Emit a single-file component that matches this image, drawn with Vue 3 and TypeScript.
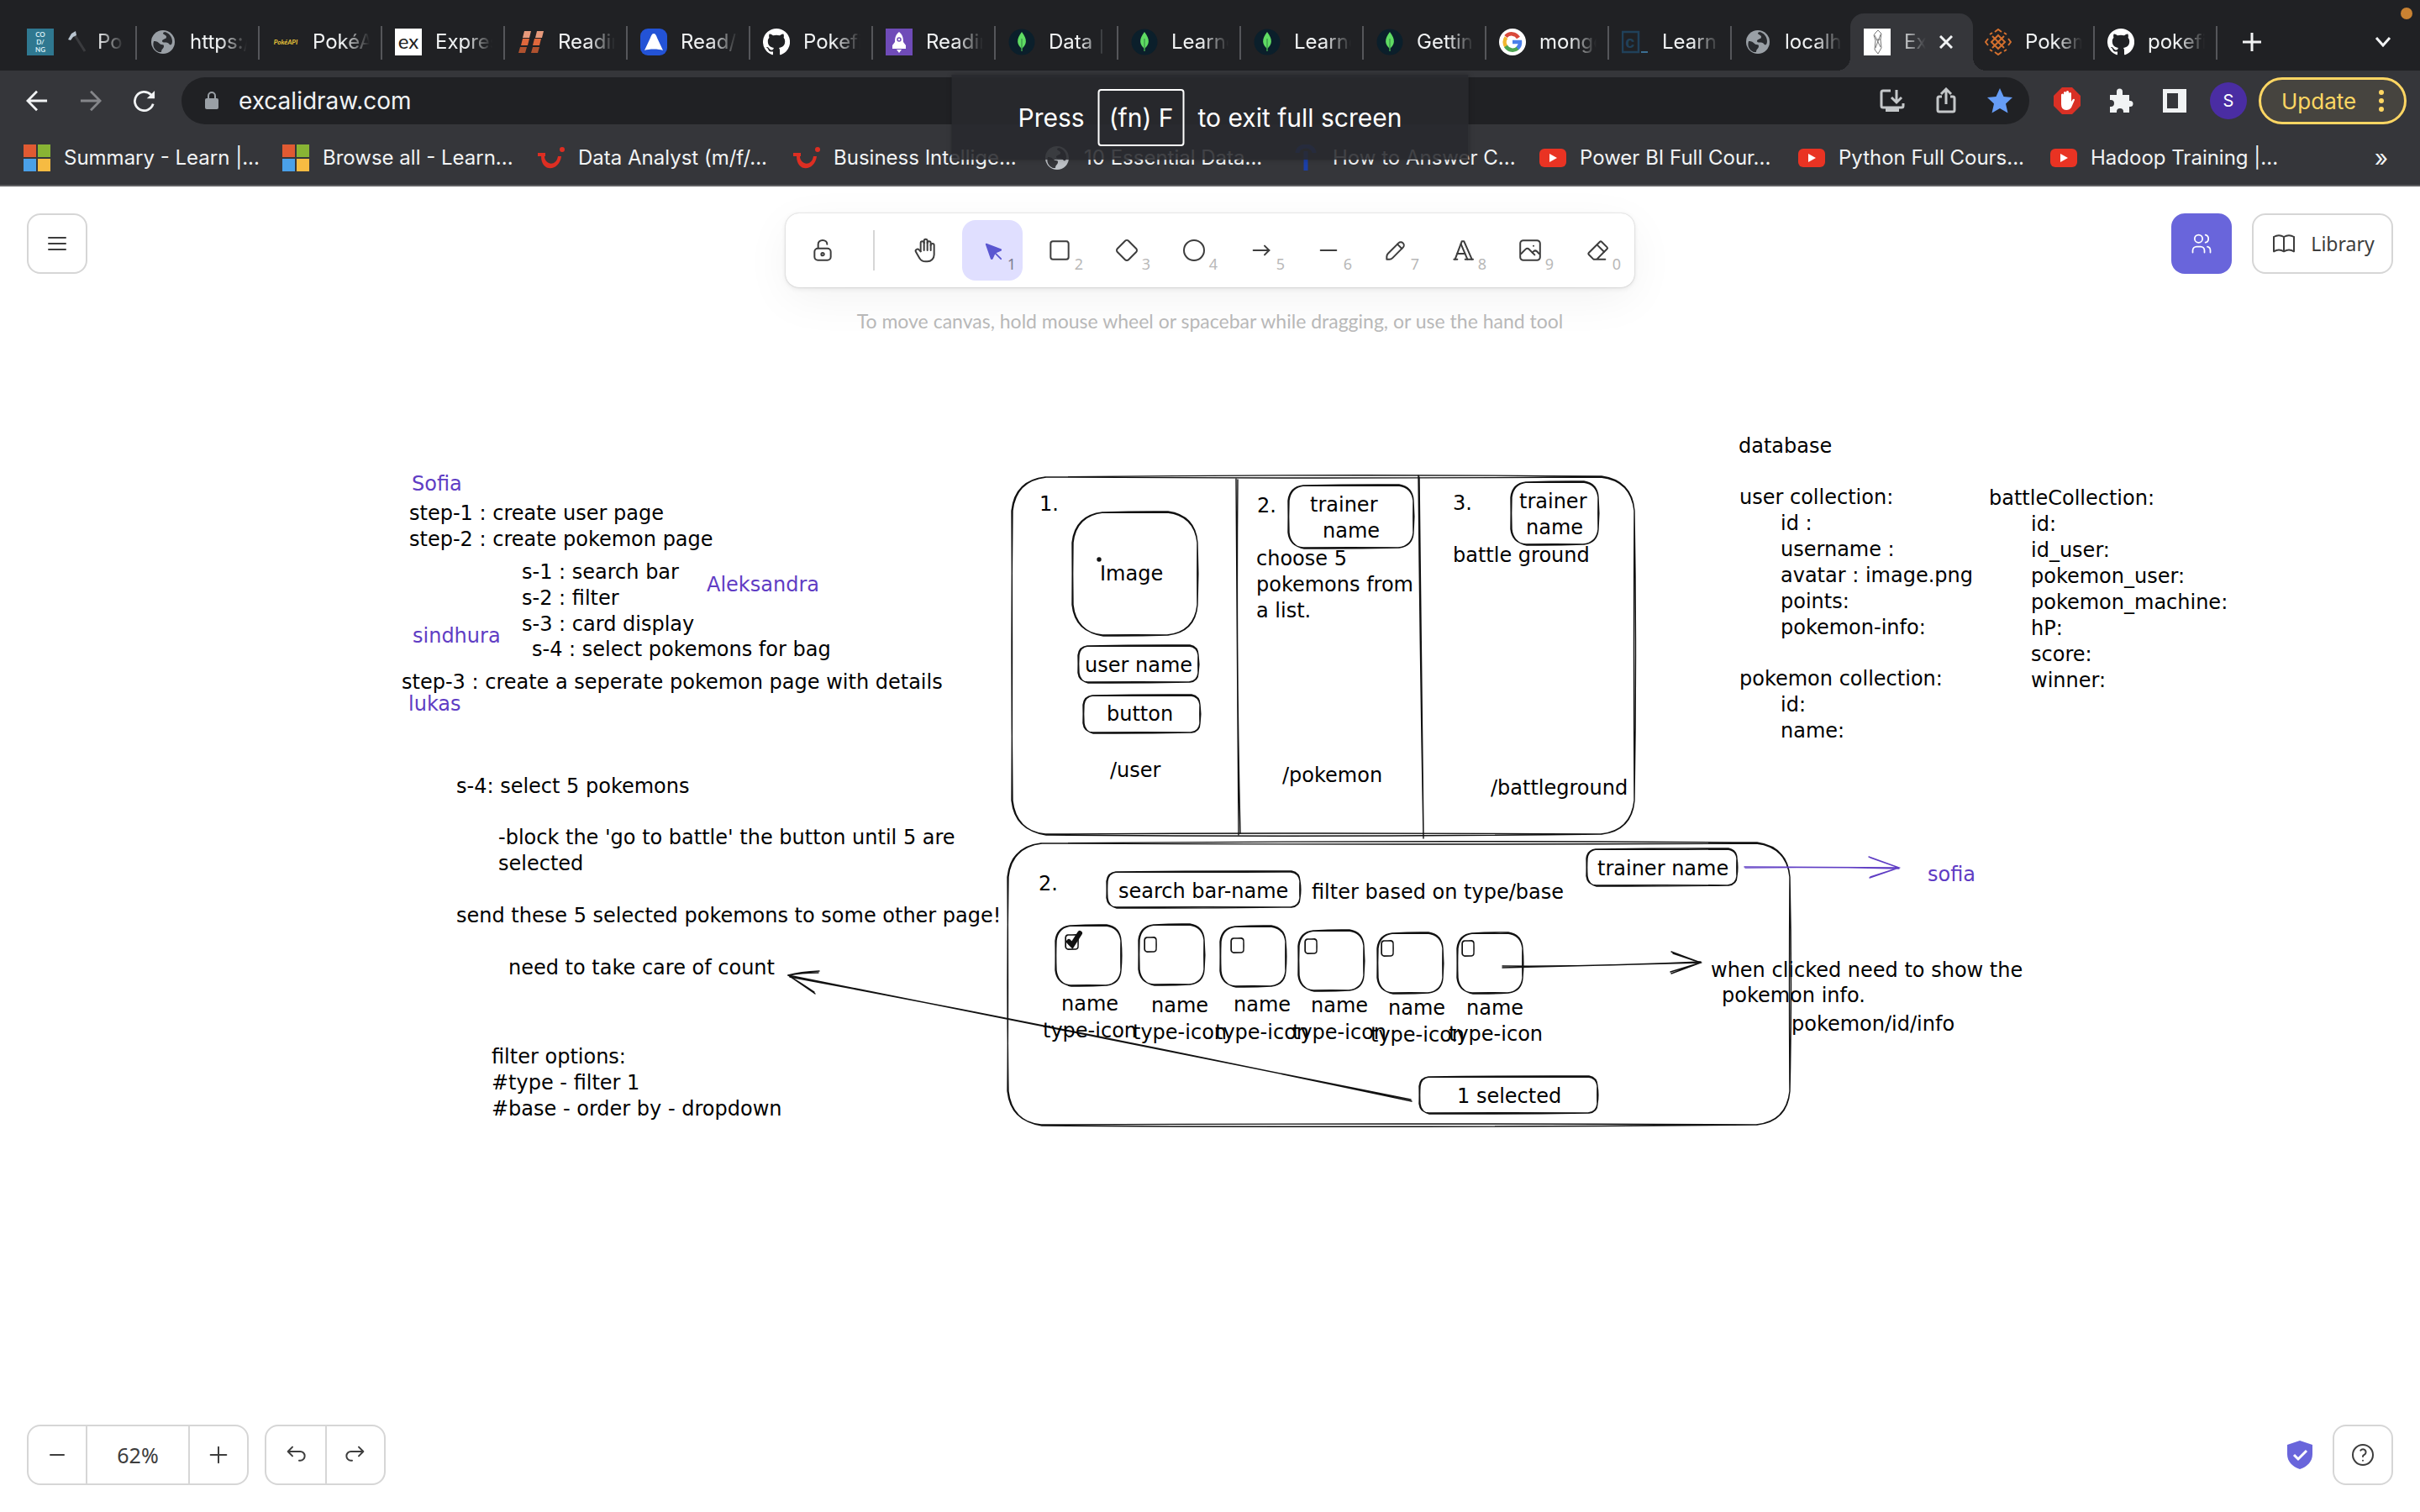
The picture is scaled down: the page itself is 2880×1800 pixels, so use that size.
<script setup lang="ts">
import { ref } from 'vue'

interface Tab { title: string; icon: string; active?: boolean; bare?: boolean }
interface Bookmark { title: string; icon: string; width: number }
interface Tool { name: string; key?: string; box: number; paths: string[]; fill?: boolean }
interface Note { x: number; y: number; lines: string[]; tint?: boolean }
interface Box { x: number; y: number; w: number; h: number; r: number }

const tabs: Tab[] = [
  { title: 'Po', icon: 'coding' },
  { title: 'https://pokeapi', icon: 'globe' },
  { title: 'PokéAPI', icon: 'pokeapi' },
  { title: 'Express', icon: 'express' },
  { title: 'Reading', icon: 'slashes' },
  { title: 'Read/W', icon: 'atlas' },
  { title: 'Pokefight', icon: 'github' },
  { title: 'Reading', icon: 'rocket' },
  { title: 'Data |', icon: 'leaf' },
  { title: 'Learned', icon: 'leaf' },
  { title: 'Learned', icon: 'leaf' },
  { title: 'Getting', icon: 'leaf' },
  { title: 'mongo', icon: 'google' },
  { title: 'Learn', icon: 'codec' },
  { title: 'localhost', icon: 'globe', bare: true },
  { title: 'Ex', icon: 'excalidraw', active: true, bare: true },
  { title: 'Pokem', icon: 'knot' },
  { title: 'pokefight', icon: 'github' },
]

const bookmarks: Bookmark[] = [
  { title: 'Summary - Learn |...', icon: 'windows', width: 308 },
  { title: 'Browse all - Learn...', icon: 'windows', width: 304 },
  { title: 'Data Analyst (m/f/...', icon: 'smile', width: 304 },
  { title: 'Business Intellige...', icon: 'smile', width: 298 },
  { title: '10 Essential Data...', icon: 'globe', width: 296 },
  { title: 'How to Answer C...', icon: 'pin', width: 294 },
  { title: 'Power BI Full Cour...', icon: 'youtube', width: 308 },
  { title: 'Python Full Cours...', icon: 'youtube', width: 300 },
  { title: 'Hadoop Training |...', icon: 'youtube', width: 300 },
]

const tools: Tool[] = [
  { name: 'Hand', box: 24, paths: ['M8 13v-7.5a1.5 1.5 0 0 1 3 0v6.5', 'M11 5.5v-2a1.5 1.5 0 1 1 3 0v8.5', 'M14 5.5a1.5 1.5 0 0 1 3 0v6.5', 'M17 7.5a1.5 1.5 0 0 1 3 0v8.5a6 6 0 0 1 -6 6h-2h.208a6 6 0 0 1 -5.012 -2.7a69.74 69.74 0 0 1 -.196 -.3c-.312 -.479 -1.407 -2.388 -3.286 -5.728a1.5 1.5 0 0 1 .536 -2.022a1.867 1.867 0 0 1 2.28 .28l1.47 1.47'] },
  { name: 'Selection', key: '1', box: 22, fill: true, paths: ['M6 6l4.153 11.793a0.365 .365 0 0 0 .331 .207a0.366 .366 0 0 0 .332 -.207l2.184 -4.793l4.787 -1.994a0.355 .355 0 0 0 .213 -.323a0.355 .355 0 0 0 -.213 -.323l-11.787 -4.36z', 'M13.5 13.5l4.5 4.5'] },
  { name: 'Rectangle', key: '2', box: 24, paths: ['M6 4h12a2 2 0 0 1 2 2v12a2 2 0 0 1 -2 2h-12a2 2 0 0 1 -2 -2v-12a2 2 0 0 1 2 -2z'] },
  { name: 'Diamond', key: '3', box: 24, paths: ['M10.5 20.4l-6.9 -6.9c-.781 -.781 -.781 -2.219 0 -3l6.9 -6.9c.781 -.781 2.219 -.781 3 0l6.9 6.9c.781 .781 .781 2.219 0 3l-6.9 6.9c-.781 .781 -2.219 .781 -3 0z'] },
  { name: 'Ellipse', key: '4', box: 24, paths: ['M3 12a9 9 0 1 0 18 0a9 9 0 1 0 -18 0'] },
  { name: 'Arrow', key: '5', box: 24, paths: ['M5 12h14', 'M15 16l4 -4', 'M15 8l4 4'] },
  { name: 'Line', key: '6', box: 20, paths: ['M4.167 10h11.666'] },
  { name: 'Draw', key: '7', box: 20, paths: ['m7.643 15.69 7.774-7.773a2.357 2.357 0 1 0-3.334-3.334L4.31 12.357a3.333 3.333 0 0 0-.977 2.357v1.953h1.953c.884 0 1.732-.352 2.357-.977Z', 'm11.25 5.417 3.333 3.333'] },
  { name: 'Text', key: '8', box: 24, paths: ['M4 20h3', 'M14 20h7', 'M6.9 15h6.9', 'M10.2 6.3l5.8 13.7', 'M5 20l6 -16h2l7 16'] },
  { name: 'Image', key: '9', box: 20, paths: ['M12.5 6.667h.01', 'M4.91 2.625h10.18a2.284 2.284 0 0 1 2.285 2.284v10.182a2.284 2.284 0 0 1-2.284 2.284H4.909a2.284 2.284 0 0 1-2.284-2.284V4.909a2.284 2.284 0 0 1 2.284-2.284Z', 'm3.333 12.5 3.334-3.333c.773-.745 1.726-.745 2.5 0l4.166 4.166', 'm11.667 11.667.833-.834c.774-.744 1.726-.744 2.5 0l1.667 1.667'] },
  { name: 'Eraser', key: '0', box: 24, paths: ['M19 20h-10.5l-4.21 -4.3a1 1 0 0 1 0 -1.41l10 -10a1 1 0 0 1 1.41 0l5 5a1 1 0 0 1 0 1.41l-9.2 9.3', 'M18 13.3l-6.3 -6.3'] },
]

const selected = ref('Selection')
const url = ref('excalidraw.com')

/* Scene coordinates start at the window's top edge; the canvas starts below the browser chrome. */
const scrollY = -222
const ascent = 22

/* x is the left edge of a note, y the baseline of its first line. */
const notes: Note[] = [
  { x: 490, y: 583, lines: ['Sofia'], tint: true },
  { x: 487, y: 618, lines: ['step-1 : create user page', 'step-2 : create pokemon page'] },
  { x: 621, y: 688, lines: ['s-1 : search bar', 's-2 : filter', 's-3 : card display'] },
  { x: 633, y: 780, lines: ['s-4 : select pokemons for bag'] },
  { x: 841, y: 703, lines: ['Aleksandra'], tint: true },
  { x: 491, y: 764, lines: ['sindhura'], tint: true },
  { x: 478, y: 819, lines: ['step-3 : create a seperate pokemon page with details'] },
  { x: 486, y: 845, lines: ['lukas'], tint: true },
  { x: 543, y: 943, lines: ['s-4: select 5 pokemons'] },
  { x: 593, y: 1004, lines: ["-block the 'go to battle' the button until 5 are", 'selected'] },
  { x: 543, y: 1097, lines: ['send these 5 selected pokemons to some other page!'] },
  { x: 605, y: 1159, lines: ['need to take care of count'] },
  { x: 585, y: 1265, lines: ['filter options:', '#type - filter 1', '#base - order by - dropdown'] },
  { x: 1237, y: 607, lines: ['1.'] },
  { x: 1309, y: 690, lines: ['Image'] },
  { x: 1291, y: 799, lines: ['user name'] },
  { x: 1317, y: 857, lines: ['button'] },
  { x: 1321, y: 924, lines: ['/user'] },
  { x: 1496, y: 609, lines: ['2.'] },
  { x: 1559, y: 608, lines: ['trainer'] },
  { x: 1574, y: 639, lines: ['name'] },
  { x: 1495, y: 672, lines: ['choose 5', 'pokemons from', 'a list.'] },
  { x: 1526, y: 930, lines: ['/pokemon'] },
  { x: 1729, y: 606, lines: ['3.'] },
  { x: 1808, y: 604, lines: ['trainer'] },
  { x: 1816, y: 635, lines: ['name'] },
  { x: 1729, y: 668, lines: ['battle ground'] },
  { x: 1774, y: 945, lines: ['/battleground'] },
  { x: 1236, y: 1059, lines: ['2.'] },
  { x: 1331, y: 1068, lines: ['search bar-name'] },
  { x: 1561, y: 1069, lines: ['filter based on type/base'] },
  { x: 1901, y: 1041, lines: ['trainer name'] },
  { x: 1263, y: 1202, lines: ['name'] },
  { x: 1370, y: 1204, lines: ['name'] },
  { x: 1468, y: 1203, lines: ['name'] },
  { x: 1560, y: 1204, lines: ['name'] },
  { x: 1652, y: 1207, lines: ['name'] },
  { x: 1745, y: 1207, lines: ['name'] },
  { x: 1241, y: 1234, lines: ['type-icon'] },
  { x: 1348, y: 1236, lines: ['type-icon'] },
  { x: 1446, y: 1236, lines: ['type-icon'] },
  { x: 1538, y: 1236, lines: ['type-icon'] },
  { x: 1631, y: 1239, lines: ['type-icon'] },
  { x: 1724, y: 1238, lines: ['type-icon'] },
  { x: 1734, y: 1312, lines: ['1 selected'] },
  { x: 2069, y: 538, lines: ['database'] },
  { x: 2070, y: 599, lines: ['user collection:'] },
  { x: 2119, y: 630, lines: ['id :', 'username :', 'avatar : image.png', 'points:', 'pokemon-info:'] },
  { x: 2070, y: 815, lines: ['pokemon collection:'] },
  { x: 2119, y: 846, lines: ['id:', 'name:'] },
  { x: 2367, y: 600, lines: ['battleCollection:'] },
  { x: 2417, y: 631, lines: ['id:', 'id_user:', 'pokemon_user:', 'pokemon_machine:', 'hP:', 'score:', 'winner:'] },
  { x: 2294, y: 1048, lines: ['sofia'], tint: true },
  { x: 2036, y: 1162, lines: ['when clicked need to show the'] },
  { x: 2049, y: 1192, lines: ['pokemon info.'] },
  { x: 2132, y: 1226, lines: ['pokemon/id/info'] },
]

const boxes: Box[] = [
  { x: 1204, y: 568, w: 741, h: 425, r: 40 },
  { x: 1199, y: 1004, w: 931, h: 335, r: 40 },
  { x: 1276, y: 610, w: 149, h: 146, r: 36 },
  { x: 1283, y: 769, w: 143, h: 43, r: 11 },
  { x: 1289, y: 828, w: 139, h: 44, r: 11 },
  { x: 1533, y: 578, w: 149, h: 74, r: 18 },
  { x: 1798, y: 574, w: 104, h: 74, r: 18 },
  { x: 1317, y: 1038, w: 230, h: 42, r: 11 },
  { x: 1888, y: 1011, w: 179, h: 43, r: 11 },
  { x: 1689, y: 1282, w: 212, h: 43, r: 11 },
  { x: 1256, y: 1102, w: 78, h: 71, r: 18 },
  { x: 1355, y: 1101, w: 78, h: 71, r: 18 },
  { x: 1452, y: 1103, w: 78, h: 71, r: 18 },
  { x: 1545, y: 1108, w: 78, h: 71, r: 18 },
  { x: 1639, y: 1111, w: 78, h: 71, r: 18 },
  { x: 1734, y: 1111, w: 78, h: 71, r: 18 },
  { x: 1268, y: 1113, w: 15, h: 17, r: 3 },
  { x: 1362, y: 1116, w: 14, h: 17, r: 3 },
  { x: 1465, y: 1117, w: 15, h: 17, r: 3 },
  { x: 1553, y: 1118, w: 14, h: 17, r: 3 },
  { x: 1644, y: 1120, w: 14, h: 18, r: 3 },
  { x: 1740, y: 1120, w: 14, h: 18, r: 3 },
]

/* Two passes of a rounded rectangle, the second with sides that bow and corners that drift. */
function sketchBox(b: Box): string {
  const pass = (bow: number, drift: number) => {
    const { w, h, r } = b
    const x = b.x + drift
    const y = b.y
    const k = r * 0.1
    return `M${x + r} ${y}Q${x + w / 2} ${y - bow * 2} ${x + w - r} ${y - drift}` +
      `Q${x + w - k} ${y + k} ${x + w - drift} ${y + r}` +
      `Q${x + w + bow} ${y + h / 2} ${x + w - drift} ${y + h - r}` +
      `Q${x + w - k} ${y + h - k} ${x + w - r} ${y + h}` +
      `Q${x + w / 2} ${y + h + bow * 2} ${x + r} ${y + h + drift}` +
      `Q${x + k} ${y + h - k} ${x} ${y + h - r}` +
      `Q${x - bow} ${y + h / 2} ${x} ${y + r}` +
      `Q${x + k} ${y + k} ${x + r} ${y}`
  }
  const big = b.w > 400 ? 2 : b.w < 20 ? 0 : 0.7
  return pass(-big / 2, 0) + pass(big, b.w < 20 ? 0.3 : 1)
}
</script>

<template>
  <div class="app">
    <header class="browser">
      <nav class="tabs" aria-label="Browser tabs">
        <div v-for="(t, i) in tabs" :key="i" class="tab" :class="{ active: t.active, bare: t.bare || t.active }">
          <svg class="fav" viewBox="0 0 32 32" aria-hidden="true">
            <g v-if="t.icon === 'coding'">
              <rect width="32" height="32" fill="#2f7890" />
              <text x="16" y="10" class="favtext" fill="#d8eef5">CO</text>
              <text x="16" y="19" class="favtext" fill="#d8eef5">D/</text>
              <text x="16" y="28" class="favtext" fill="#d8eef5">NG</text>
            </g>
            <g v-else-if="t.icon === 'globe'">
              <circle cx="16" cy="16" r="14" fill="#9aa0a6" />
              <path d="M5 15c4 0 5 1 7 3s5 0 5 3-3 3-3 7l-3 0C6 26 3 21 5 15zM16 5c0 3 4 2 4 5s-5 2-5 5 6 0 8 3 4 1 4-3c0-5-4-10-9-11z" fill="#292b2f" />
            </g>
            <text v-else-if="t.icon === 'pokeapi'" x="16" y="19" class="poke">PokéAPI</text>
            <g v-else-if="t.icon === 'express'"><rect width="32" height="32" fill="#fff" /><text x="16" y="24" class="ex">ex</text></g>
            <g v-else-if="t.icon === 'slashes'">
              <path d="M8 3h8l-2 8H6zM23 3h8l-2 8h-8z" fill="#e79a7c" />
              <path d="M6 12h8l-2 8H4zM20 12h8l-2 8h-8z" fill="#e0683c" />
              <path d="M3 22h8l-2 7H1zM18 22h8l-2 7h-8z" fill="#b0522f" />
            </g>
            <g v-else-if="t.icon === 'atlas'"><rect width="32" height="32" rx="9" fill="#2353d6" /><path d="M16 6c2 0 3 2 4 5l7 15c-5-2-17-2-22 0l7-15c1-3 2-5 4-5z" fill="#fff" /></g>
            <path v-else-if="t.icon === 'github'" fill="#fff" d="M16 0a16 16 0 0 0-5 31.200c.8.100 1-.4 1-.8v-3c-4.500 1-5.400-1.900-5.400-1.900-.7-1.900-1.800-2.400-1.800-2.400-1.400-1 .1-1 .1-1 1.600.1 2.500 1.700 2.500 1.700 1.400 2.400 3.700 1.700 4.700 1.300.1-1 .5-1.700 1-2.100-3.500-.4-7.300-1.800-7.300-7.900 0-1.700.6-3.200 1.700-4.300-.2-.4-.8-2 .1-4.200 0 0 1.400-.4 4.400 1.600a15 15 0 0 1 8 0c3-2 4.400-1.600 4.400-1.600.9 2.200.3 3.800.2 4.200a6.200 6.200 0 0 1 1.600 4.300c0 6.100-3.700 7.500-7.300 7.900.6.500 1.100 1.500 1.100 3v4.400c0 .4.300.9 1.100.8A16 16 0 0 0 16 0z" />
            <g v-else-if="t.icon === 'rocket'"><rect width="32" height="32" fill="#6f4bb8" /><path d="M16 4c4 3 5 7 5 12l3 4v4H8v-4l3-4c0-5 1-9 5-12zM13 25h6l-3 4z" fill="#fff" /><circle cx="16" cy="13" r="2" fill="none" stroke="#6f4bb8" stroke-width="1.500" /></g>
            <g v-else-if="t.icon === 'leaf'"><circle cx="16" cy="16" r="15.500" fill="#0b1f2b" /><path d="M16 4c7 9 6 15 0 20c-6-5-7-11 0-20z" fill="#5fdc63" /><path d="M16 12v15" stroke="#3f9e4e" stroke-width="1.500" /></g>
            <g v-else-if="t.icon === 'google'" fill="none" stroke-width="4.500">
              <circle cx="16" cy="16" r="16" fill="#fff" />
              <path d="M23 10a9.300 9.300 0 0 0-15-1.500" stroke="#d9493a" transform="translate(0 1)" />
              <path d="M8.500 10.500a9 9 0 0 0 0 11" stroke="#f2b72f" />
              <path d="M8 21a9.300 9.300 0 0 0 14.500 2" stroke="#4da552" />
              <path d="M16 16h9a9 9 0 0 1-3 7.500" stroke="#4a80ea" />
            </g>
            <g v-else-if="t.icon === 'codec'"><path d="M1 4h19v24H1z" fill="none" stroke="#20415a" stroke-width="2.500" /><text x="10" y="23" class="cc">c</text><path d="M23 28h8" stroke="#3b6f93" stroke-width="2" /></g>
            <g v-else-if="t.icon === 'excalidraw'"><rect width="32" height="32" fill="#fff" /><path d="M14 5l3-3 4 4-1 7 1 10-4 7-4-5 1-11-2-6zM13 8l7 14M20 7l-6 16M15 13h5" fill="none" stroke="#777" /></g>
            <g v-else fill="none" stroke="#d4702e" stroke-width="2"><path d="M9 9l14 14M23 9L9 23M16 8l8 8-8 8-8-8z" /><path d="M12 4l4-3 4 3M12 28l4 3 4-3M4 12l-3 4 3 4M28 12l3 4-3 4M6 7l3-2M26 7l-3-2M6 25l3 2M26 25l-3 2" /></g>
          </svg>
          <svg v-if="t.icon === 'coding'" class="hammer" viewBox="0 0 24 32" aria-hidden="true"><path d="M9 8l12 19" stroke="#3a3b3e" stroke-width="3" /><path d="M1 13l4-7 5-3 1 5-4 2-3 4z" fill="#b8c4cf" /></svg>
          <span class="title">{{ t.title }}</span>
          <button v-if="t.active" class="close" aria-label="Close tab">
            <svg viewBox="0 0 16 16"><path d="M1 1l14 14M15 1L1 15" /></svg>
          </button>
        </div>
        <button class="newtab" aria-label="New tab"><svg viewBox="0 0 24 24"><path d="M12 1v22M1 12h22" /></svg></button>
        <button class="more" aria-label="Search tabs"><svg viewBox="0 0 20 12"><path d="M2 1l8 9 8-9" /></svg></button>
        <i class="rec"></i>
      </nav>

      <div class="toolbar">
        <button class="nav" aria-label="Back"><svg viewBox="0 0 28 28"><path d="M27 14H3M14 2L2 14l12 12" /></svg></button>
        <button class="nav dim" aria-label="Forward"><svg viewBox="0 0 28 28"><path d="M1 14h24M14 2l12 12-12 12" /></svg></button>
        <button class="nav" aria-label="Reload"><svg viewBox="0 0 28 28"><path d="M25 18a12 12 0 1 1-3-12l4 4" /><path d="M27 1v10H17z" class="solid" /></svg></button>
        <div class="omnibox">
          <svg class="lock" viewBox="0 0 16 22" aria-hidden="true"><path d="M2 8h12a2 2 0 0 1 2 2v9a2 2 0 0 1-2 2H2a2 2 0 0 1-2-2v-9a2 2 0 0 1 2-2z" fill="#9aa0a6" /><path d="M4 9V5a4 4 0 0 1 8 0v4" fill="none" stroke="#9aa0a6" stroke-width="2" /></svg>
          <input v-model="url" class="url" aria-label="Address" />
          <svg class="oi" viewBox="0 0 32 32" aria-hidden="true"><path d="M14 4H5a2 2 0 0 0-2 2v16a2 2 0 0 0 2 2h22a2 2 0 0 0 2-2v-3M21 3v14M15 12l6 6 6-6" /><path class="base" d="M8 24h16v5H8z" /></svg>
          <svg class="oi" viewBox="0 0 32 32" aria-hidden="true"><path d="M11 11H8a2 2 0 0 0-2 2v14a2 2 0 0 0 2 2h16a2 2 0 0 0 2-2V13a2 2 0 0 0-2-2h-3M16 20V3M10 8l6-6 6 6" /></svg>
          <svg class="oi" viewBox="0 0 32 32" aria-hidden="true"><path class="star" d="M16 1l4.500 10 10.500 1-8 7.500 2.500 11L16 25l-9.500 5.500 2.500-11-8-7.500 10.500-1z" /></svg>
        </div>
        <div class="exts">
          <svg class="ext" viewBox="0 0 32 32" aria-hidden="true"><path d="M10 0h12l10 10v12L22 32H10L0 22V10z" fill="#d93025" /><path d="M9 16V8.500q1.500-2 3 0V6q1.500-2 3 0V5q1.500-2 3 0v2q1.500-2 3 0v10l2-3q2-1 2 1l-4 9q-2 3-6 3-6 0-6-7z" fill="#fff" /></svg>
          <svg class="ext" viewBox="0 0 32 32" aria-hidden="true"><path d="M3 9h8V5a3.500 3.500 0 0 1 7 0v4h8v7h1a3.500 3.500 0 0 1 0 7h-1v7h-7v-1a4 4 0 0 0-8 0v1H3v-7h1a4 4 0 0 0 0-8H3z" fill="#f1f3f4" /></svg>
          <svg class="ext" viewBox="0 0 32 32" aria-hidden="true"><path d="M2 2h28v28H2zM7 7v18h13V7z" fill="#f1f3f4" fill-rule="evenodd" /></svg>
          <button class="avatar" aria-label="Profile">S</button>
        </div>
        <button class="update"><span>Update</span><i></i></button>
      </div>

      <nav class="bookmarks" aria-label="Bookmarks">
        <a v-for="b in bookmarks" :key="b.title" href="#" class="bookmark" :style="{ width: b.width + 'px' }">
          <svg class="fav" viewBox="0 0 32 32" aria-hidden="true">
            <g v-if="b.icon === 'windows'"><path d="M0 0h15v15H0z" fill="#e05a32" /><path d="M17 0h15v15H17z" fill="#88b434" /><path d="M0 17h15v15H0z" fill="#4aa0e8" /><path d="M17 17h15v15H17z" fill="#f6bb42" /></g>
            <g v-else-if="b.icon === 'smile'"><path d="M0 10h9v4H8c0 10 14 13 16 0h4c-2 18-24 20-24 0H0z" fill="#dd2e22" /><circle cx="29" cy="6" r="3" fill="#dd2e22" /></g>
            <g v-else-if="b.icon === 'globe'"><circle cx="16" cy="16" r="14" fill="#bdc1c6" /><path d="M5 15c4 0 5 1 7 3s5 0 5 3-3 3-3 7l-3 0C6 26 3 21 5 15zM16 5c0 3 4 2 4 5s-5 2-5 5 6 0 8 3 4 1 4-3c0-5-4-10-9-11z" fill="#35363a" /></g>
            <path v-else-if="b.icon === 'pin'" d="M6 10a10 8 0 0 1 20 0M16 8v23" fill="none" stroke="#1b3fa8" stroke-width="5" />
            <g v-else><rect y="5" width="32" height="22" rx="6" fill="#e93323" /><path d="M12 11l9 5-9 5z" fill="#fff" /></g>
          </svg>
          <span>{{ b.title }}</span>
        </a>
        <button class="overflow" aria-label="More bookmarks">»</button>
      </nav>

      <div class="fullscreen" role="status">
        <span>Press</span><kbd>(fn) F</kbd><span>to exit full screen</span>
      </div>
    </header>

    <main class="canvas">
      <svg class="scene" aria-hidden="true">
        <g :transform="`translate(0 ${scrollY})`" class="ink">
          <path v-for="(b, i) in boxes" :key="i" :d="sketchBox(b)" />
          <path d="M1471 570Q1472 780 1474 994M1473 571Q1471 790 1476 992" />
          <path d="M1688 566Q1690 780 1694 998M1689 568Q1692 780 1694 996" />
          <circle cx="1308" cy="666" r="2" />
          <path d="M1679 1309Q1310 1236 938 1161M1680 1311Q1300 1230 940 1163" />
          <path d="M975 1156Q952 1157 938 1161M974 1158Q954 1158 938 1161M938 1161L970 1183M938 1161Q956 1172 969 1181" />
          <path d="M1788 1152L2024 1146M1788 1150Q1900 1151 2024 1145" />
          <path d="M1989 1133L2024 1146L1989 1159M1991 1135L2024 1146L1988 1157" />
          <path class="purple" d="M2076 1032L2260 1033M2077 1033Q2170 1032 2260 1034M2224 1020L2260 1033L2226 1044M2226 1021L2260 1033L2225 1045" />
          <path class="tick" d="M1272 1121l4 4 9-14" />
        </g>
      </svg>
      <p v-for="(n, i) in notes" :key="i" class="note" :class="{ tint: n.tint }" :style="{ left: n.x + 'px', top: n.y - ascent + scrollY + 'px' }">
        <span v-for="line in n.lines" :key="line">{{ line }}</span>
      </p>

      <div class="ui">
        <div class="top">
          <button class="square" aria-label="Menu"><svg class="icon" viewBox="0 0 32 32"><path d="M6 9h20M6 16h20M6 23h20" stroke-width="2" /></svg></button>
          <div class="island">
            <button class="tool" aria-label="Keep selected tool active">
              <svg class="icon" viewBox="0 0 20 20"><path d="M13.542 8.542H6.458a2.500 2.500 0 0 0-2.500 2.500v3.750a2.500 2.500 0 0 0 2.500 2.500h7.084a2.500 2.500 0 0 0 2.500-2.500v-3.750a2.500 2.500 0 0 0-2.500-2.500Z" /><path d="M10 13.958a1.042 1.042 0 1 0 0-2.083 1.042 1.042 0 0 0 0 2.083Z" /><path d="M6.667 8.333V5.417C6.667 3.806 8.159 2.500 10 2.500c1.841 0 3.333 1.306 3.333 2.917" /></svg>
            </button>
            <i class="rule"></i>
            <button v-for="t in tools" :key="t.name" class="tool" :class="{ on: selected === t.name }" :aria-label="t.name" @click="selected = t.name">
              <svg class="icon" :class="{ fill: t.fill, wide: t.box === 24 }" :viewBox="`0 0 ${t.box} ${t.box}`"><path v-for="p in t.paths" :key="p" :d="p" /></svg>
              <span v-if="t.key" class="key">{{ t.key }}</span>
            </button>
          </div>
          <div class="right">
            <button class="square share" aria-label="Live collaboration">
              <svg viewBox="0 0 24 24"><path d="M5 7a4 4 0 1 0 8 0a4 4 0 1 0 -8 0" /><path d="M3 21v-2a4 4 0 0 1 4 -4h4a4 4 0 0 1 4 4v2" /><path d="M16 3.130a4 4 0 0 1 0 7.750" /><path d="M21 21v-2a4 4 0 0 0 -3 -3.850" /></svg>
            </button>
            <button class="library">
              <svg class="icon wide" viewBox="0 0 24 24"><path d="M3 19a9 9 0 0 1 9 0a9 9 0 0 1 9 0M3 6a9 9 0 0 1 9 0a9 9 0 0 1 9 0M3 6v13M12 6v13M21 6v13" /></svg>
              <span>Library</span>
            </button>
          </div>
        </div>
        <p class="hint">To move canvas, hold mouse wheel or spacebar while dragging, or use the hand tool</p>
        <div class="bottom">
          <div class="group">
            <button class="out" aria-label="Zoom out"><svg class="icon" viewBox="0 0 20 20"><path d="M5 10h10" /></svg></button>
            <button class="percent">62%</button>
            <button aria-label="Zoom in"><svg class="icon" viewBox="0 0 20 20"><path d="M10 4.167v11.666M4.167 10h11.666" /></svg></button>
          </div>
          <div class="group">
            <button aria-label="Undo"><svg class="icon" viewBox="0 0 20 20"><path d="M7.500 10.833 4.167 7.500 7.500 4.167M4.167 7.500h9.166a3.333 3.333 0 0 1 0 6.667H12.500" /></svg></button>
            <button aria-label="Redo"><svg class="icon" viewBox="0 0 20 20"><path d="M12.500 10.833 15.833 7.500 12.500 4.167M15.833 7.500H6.667a3.333 3.333 0 1 0 0 6.667H7.500" /></svg></button>
          </div>
          <a href="#" class="shield" aria-label="End-to-end encryption">
            <svg viewBox="0 0 32 36"><path d="M16 1l15 5v11c0 9-6 15-15 18C7 32 1 26 1 17V6z" fill="#6965db" /><path d="M9 18l5 5 10-10" fill="none" stroke="#fff" stroke-width="3" /></svg>
          </a>
          <button class="square" aria-label="Help"><svg class="icon wide" viewBox="0 0 24 24"><path d="M3 12a9 9 0 1 0 18 0a9 9 0 1 0 -18 0M12 17v.01M12 13.500a1.500 1.500 0 0 1 1 -1.500a2.600 2.600 0 1 0 -3 -4" /></svg></button>
        </div>
      </div>
    </main>
  </div>
</template>

<style>
body { margin: 0; background: #fff; }
</style>

<style scoped>
.app { display: flex; flex-direction: column; min-height: 100vh; font-family: Inter, "Liberation Sans", sans-serif; overflow: hidden; }
button { border: 0; background: none; padding: 0; font: inherit; color: inherit; display: flex; align-items: center; justify-content: center; box-sizing: border-box; }
svg { display: block; flex: none; }
p { margin: 0; }

.browser { position: relative; background: #35363a; color: #f1f3f4; border-bottom: 2px solid #5f5f62; }
.tabs { display: flex; align-items: flex-end; height: 84px; padding: 0 32px 0 16px; box-sizing: border-box; background: #202124; position: relative; }
.tab { position: relative; display: flex; align-items: center; gap: 16px; width: 146px; height: 68px; padding: 0 14px 0 16px; box-sizing: border-box; }
.tab::after { content: ""; position: absolute; right: -1px; top: 15px; width: 2px; height: 40px; background: #55565a; }
.tab.bare::after { display: none; }
.tab.active { margin: 0 -2px 0 -4px; padding-right: 24px; background: #35363a; border-radius: 16px 16px 0 0; }
.tab.active::before, .tab.active::after { content: ""; display: block; position: absolute; top: auto; bottom: 0; width: 16px; height: 16px; }
.tab.active::before { left: -16px; background: radial-gradient(circle at 0 0, #202124 16px, #35363a 16px); }
.tab.active::after { right: -16px; background: radial-gradient(circle at 100% 0, #202124 16px, #35363a 16px); }
.fav { width: 32px; height: 32px; }
.favtext { font: 700 8px Lato, sans-serif; text-anchor: middle; }
.poke { font: italic 700 8px Lato, sans-serif; text-anchor: middle; fill: #e8c53a; }
.ex { font: 400 24px Lato, sans-serif; text-anchor: middle; fill: #222; }
.cc { font: 700 20px "Liberation Mono", monospace; text-anchor: middle; fill: #20415a; }
.hammer { width: 24px; height: 32px; margin-right: -4px; }
.title { flex: 1; min-width: 0; overflow: hidden; white-space: nowrap; font-size: 24px; line-height: 32px; mask-image: linear-gradient(90deg, #000 calc(100% - 32px), transparent); }
.close { width: 16px; }
.close svg { width: 16px; }
.close path, .newtab path, .more path { fill: none; stroke: #f1f3f4; stroke-width: 3; }
.newtab { width: 84px; height: 68px; }
.newtab svg { width: 24px; }
.more { margin-left: auto; height: 68px; width: 24px; }
.more svg { width: 20px; }
.rec { position: absolute; right: 9px; top: 9px; width: 14px; height: 14px; border-radius: 50%; background: #c98232; }

.toolbar { display: flex; align-items: center; height: 72px; padding: 0 16px 0 12px; }
.nav { width: 64px; height: 56px; }
.nav svg { width: 26px; }
.nav path { fill: none; stroke: #f1f3f4; stroke-width: 3; }
.nav .solid { fill: #f1f3f4; stroke: none; }
.nav.dim path { stroke: #85868a; }
.omnibox { flex: 1; display: flex; align-items: center; gap: 32px; height: 56px; margin-left: 12px; padding: 0 19px 0 28px; border-radius: 28px; background: #202124; }
.lock { width: 16px; height: 22px; margin-right: -8px; }
.url { flex: 1; min-width: 0; border: 0; padding: 0; margin: 0; background: none; color: #f1f3f4; font: 400 28px/40px Inter, sans-serif; outline: none; }
.oi { width: 32px; height: 32px; }
.oi path { fill: none; stroke: #c4c7c9; stroke-width: 3; }
.oi .base { fill: #c4c7c9; stroke: none; }
.oi .star { fill: #669df6; stroke: none; }
.exts { display: flex; align-items: center; gap: 32px; margin: 0 14px 0 29px; }
.ext { width: 32px; }
.avatar { width: 44px; height: 44px; margin-left: -6px; border-radius: 50%; background: #4a2da3; color: #fff; font-size: 20px; }
.update { width: 176px; height: 56px; padding: 0 24px; justify-content: space-between; border: 3px solid #fdd663; border-radius: 28px; background: #46443f; color: #fdd663; font-size: 26px; }
.update i { width: 6px; height: 6px; border-radius: 50%; background: #fdd663; box-shadow: 0 -10px #fdd663, 0 10px #fdd663; }

.bookmarks { display: flex; align-items: center; height: 64px; padding: 0 28px; }
.bookmark { display: flex; align-items: center; gap: 16px; color: #f1f3f4; text-decoration: none; white-space: nowrap; font-size: 24px; line-height: 32px; }
.overflow { margin-left: auto; width: 36px; font-size: 28px; }

.fullscreen { position: absolute; left: 50%; top: 89px; transform: translateX(-50%); display: flex; align-items: center; justify-content: center; gap: 16px; width: 615px; height: 101px; box-sizing: border-box; background: rgba(40, 41, 46, 0.88); box-shadow: 0 0 6px rgba(0, 0, 0, 0.25); color: #fff; font-size: 30px; white-space: nowrap; }
kbd { box-sizing: border-box; height: 68px; padding: 0 11px; border: 2px solid #fff; border-radius: 4px; font: inherit; line-height: 64px; }

.canvas { position: relative; flex: 1; background: #fff; }
.scene { position: absolute; inset: 0; width: 100%; height: 100%; overflow: visible; }
.ink path, .ink circle { fill: none; stroke: #111; stroke-width: 1.400; stroke-linecap: round; }
.ink circle { fill: #111; }
.ink .purple { stroke: #5f3dc4; }
.ink .tick { stroke-width: 6; }
.note { position: absolute; display: flex; flex-direction: column; white-space: pre; color: #000; font-family: "DejaVu Sans", sans-serif; font-size: 24px; line-height: 31px; }
.note.tint { color: #5f3dc4; }

.ui { position: absolute; inset: 0; display: flex; flex-direction: column; padding: 32px; color: #3d3d3d; font-family: "Noto Sans", sans-serif; }
.top { display: grid; grid-template-columns: 1fr auto 1fr; align-items: start; }
.square, .library { height: 72px; border: 2px solid #d6d6d6; border-radius: 16px; background: #fff; }
.square { width: 72px; }
.icon { width: 32px; height: 32px; fill: none; stroke: #3d3d3d; stroke-width: 1.250; stroke-linecap: round; stroke-linejoin: round; }
.icon.wide { stroke-width: 1.500; }
.island { display: flex; align-items: center; gap: 8px; padding: 8px; border-radius: 16px; background: #fff; box-shadow: 0 0 2px rgba(0, 0, 0, 0.25), 0 2px 6px rgba(0, 0, 0, 0.08), 0 14px 54px rgba(0, 0, 0, 0.05); }
.tool { position: relative; width: 72px; height: 72px; border-radius: 16px; }
.rule { width: 2px; height: 48px; margin: 0 16px; background: #d6d6d6; }
.tool.on { background: #e0dfff; }
.tool.on .icon { stroke: #5b57d1; }
.tool.on .fill { fill: #5b57d1; }
.key { position: absolute; right: 8px; bottom: 8px; font-size: 18px; line-height: 24px; color: #b8b8b8; }
.on .key { color: #7d7d92; }
.right { display: flex; justify-content: flex-end; gap: 24px; }
.share { border: 0; background: #6965db; }
.share svg { width: 28px; height: 28px; fill: none; stroke: #fff; stroke-width: 1.500; stroke-linecap: round; }
.library { width: 168px; gap: 16px; font-size: 23px; }
.hint { margin-top: 24px; text-align: center; font-family: Lato, sans-serif; font-size: 23px; line-height: 32px; color: #b8b8b8; }
.bottom { display: flex; align-items: center; margin-top: auto; }
.group { display: flex; height: 72px; box-sizing: border-box; margin-right: 19px; border: 2px solid #d6d6d6; border-radius: 16px; }
.group button { width: 70px; }
.group button + button { border-left: 2px solid #d6d6d6; }
.group .out { width: 68px; }
.group .percent { width: 122px; font-size: 25px; }
.shield { margin-left: auto; margin-right: 23px; }
.shield svg { width: 32px; height: 36px; }
</style>
